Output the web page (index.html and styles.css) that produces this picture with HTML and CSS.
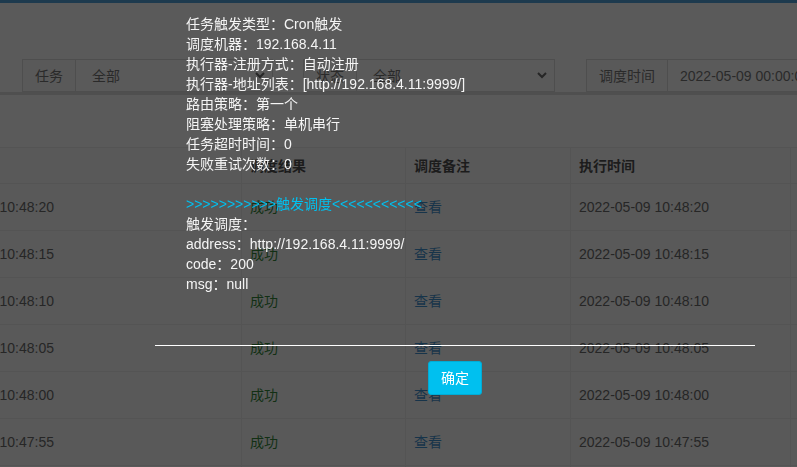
FILE: index.html
```html
<!DOCTYPE html>
<html lang="zh-CN">
<head>
<meta charset="utf-8">
<title>调度日志</title>
<link rel="stylesheet" href="styles.css">
</head>
<body>
<div class="topbar"></div>
<section class="content">
  <div class="filters">
    <div class="group group-job">
      <span class="addon">任务</span>
      <div class="select"><span>全部</span><svg class="chev" width="10" height="7" viewBox="0 0 10 7"><polyline points="1,1 5,5 9,1" fill="none" stroke="#262626" stroke-width="2"/></svg></div>
    </div>
    <div class="group group-status">
      <span class="addon">状态</span>
      <div class="select"><span>全部</span><svg class="chev" width="10" height="7" viewBox="0 0 10 7"><polyline points="1,1 5,5 9,1" fill="none" stroke="#262626" stroke-width="2"/></svg></div>
    </div>
    <div class="group group-time">
      <span class="addon">调度时间</span>
      <div class="input">2022-05-09 00:00:00 - 2022-05-09 23:59:59</div>
    </div>
  </div>
  <div class="box-line"></div>
  <div class="table-wrap">
    <table class="log-table">
      <colgroup><col class="c-a"><col class="c-b"><col class="c-c"><col class="c-d"><col class="c-e"></colgroup>
      <thead>
        <tr><th>调度时间</th><th>调度结果</th><th>调度备注</th><th>执行时间</th><th>执行结果</th></tr>
      </thead>
      <tbody>
        <tr><td>2022-05-09 10:48:20</td><td class="ok">成功</td><td class="link">查看</td><td>2022-05-09 10:48:20</td><td class="ok">成功</td></tr>
        <tr><td>2022-05-09 10:48:15</td><td class="ok">成功</td><td class="link">查看</td><td>2022-05-09 10:48:15</td><td class="ok">成功</td></tr>
        <tr><td>2022-05-09 10:48:10</td><td class="ok">成功</td><td class="link">查看</td><td>2022-05-09 10:48:10</td><td class="ok">成功</td></tr>
        <tr><td>2022-05-09 10:48:05</td><td class="ok">成功</td><td class="link">查看</td><td>2022-05-09 10:48:05</td><td class="ok">成功</td></tr>
        <tr><td>2022-05-09 10:48:00</td><td class="ok">成功</td><td class="link">查看</td><td>2022-05-09 10:48:00</td><td class="ok">成功</td></tr>
        <tr><td>2022-05-09 10:47:55</td><td class="ok">成功</td><td class="link">查看</td><td>2022-05-09 10:47:55</td><td class="ok">成功</td></tr>
        <tr><td>2022-05-09 10:47:50</td><td class="ok">成功</td><td class="link">查看</td><td>2022-05-09 10:47:50</td><td class="ok">成功</td></tr>
      </tbody>
    </table>
  </div>
</section>

<div class="dialog">
  <div class="dialog-msg">
    任务触发类型：Cron触发<br>
    调度机器：192.168.4.11<br>
    执行器-注册方式：自动注册<br>
    执行器-地址列表：[http://192.168.4.11:9999/]<br>
    路由策略：第一个<br>
    阻塞处理策略：单机串行<br>
    任务超时时间：0<br>
    失败重试次数：0<br>
    <br>
    <span class="trigger">&gt;&gt;&gt;&gt;&gt;&gt;&gt;&gt;&gt;&gt;&gt;触发调度&lt;&lt;&lt;&lt;&lt;&lt;&lt;&lt;&lt;&lt;&lt;</span><br>
    触发调度：<br>
    address：http://192.168.4.11:9999/<br>
    code：200<br>
    msg：null
  </div>
  <div class="dialog-foot">
    <button class="btn-ok" type="button">确定</button>
  </div>
</div>
</body>
</html>
```

FILE: styles.css
```css
html, body {
  margin: 0;
  padding: 0;
}
body {
  width: 797px;
  height: 467px;
  overflow: hidden;
  background: #5a5a5a;
  font-family: "Liberation Sans", "Noto Sans CJK SC", sans-serif;
  font-size: 14px;
  line-height: 20px;
  color: #262626;
}
.topbar {
  height: 3px;
  background: #1d3a4e;
}
.content {
  padding-top: 56px;
}
.filters {
  display: flex;
  padding-left: 22px;
  height: 33px;
  overflow: hidden;
}
.group {
  display: flex;
  height: 33px;
  box-sizing: border-box;
  flex-shrink: 0;
}
.group-job { width: 251px; }
.group-status { width: 252px; margin-left: 30px; }
.group-time { width: 360px; margin-left: 31px; }
.addon {
  box-sizing: border-box;
  height: 33px;
  padding: 6px 12px;
  border: 1px solid #4e4e4e;
  color: #2a2a2a;
  background: #595959;
  white-space: nowrap;
  flex-shrink: 0;
}
.select, .input {
  flex: 1;
  min-width: 0;
  display: flex;
  align-items: center;
  justify-content: space-between;
  box-sizing: border-box;
  height: 33px;
  padding: 0 7px 0 16px;
  border: 1px solid #4e4e4e;
  border-left: 0;
  color: #2a2a2a;
  white-space: nowrap;
  overflow: hidden;
}
.input {
  padding-left: 12px;
  justify-content: flex-start;
}
.chev { display: block; }
.box-line {
  height: 3px;
  background: #4f4f4f;
}
.table-wrap {
  margin-top: 52px;
  overflow: hidden;
  background: #595959;
}
.log-table {
  margin-left: -85px;
  border-collapse: collapse;
  table-layout: fixed;
  width: 1100px;
}
.c-a { width: 326px; }
.c-b { width: 164px; }
.c-c { width: 165px; }
.c-d { width: 220px; }
.c-e { width: 225px; }
.log-table th,
.log-table td {
  text-align: left;
  padding: 0 8px;
  border: 1px solid #545454;
  white-space: nowrap;
  overflow: hidden;
}
.log-table th {
  height: 35px;
  font-weight: bold;
  color: #1c1c1c;
}
.log-table td {
  height: 46px;
}
.log-table .ok { color: #123014; }
.log-table .link { color: #17344a; }

.dialog {
  position: fixed;
  top: 0;
  left: 155px;
  width: 600px;
  color: #f5f5f5;
}
.dialog-msg {
  padding: 14px 0 51px 31px;
  line-height: 20px;
}
.trigger { color: #00c0ef; }
.dialog-foot {
  border-top: 1px solid #ffffff;
  padding-top: 15px;
  display: flex;
  justify-content: center;
}
.btn-ok {
  box-sizing: border-box;
  height: 34px;
  padding: 6px 12px;
  border: 1px solid #00acd6;
  border-radius: 3px;
  background: #00c0ef;
  color: #ffffff;
  font-family: "Liberation Sans", "Noto Sans CJK SC", sans-serif;
  font-size: 14px;
  line-height: 20px;
}
```
